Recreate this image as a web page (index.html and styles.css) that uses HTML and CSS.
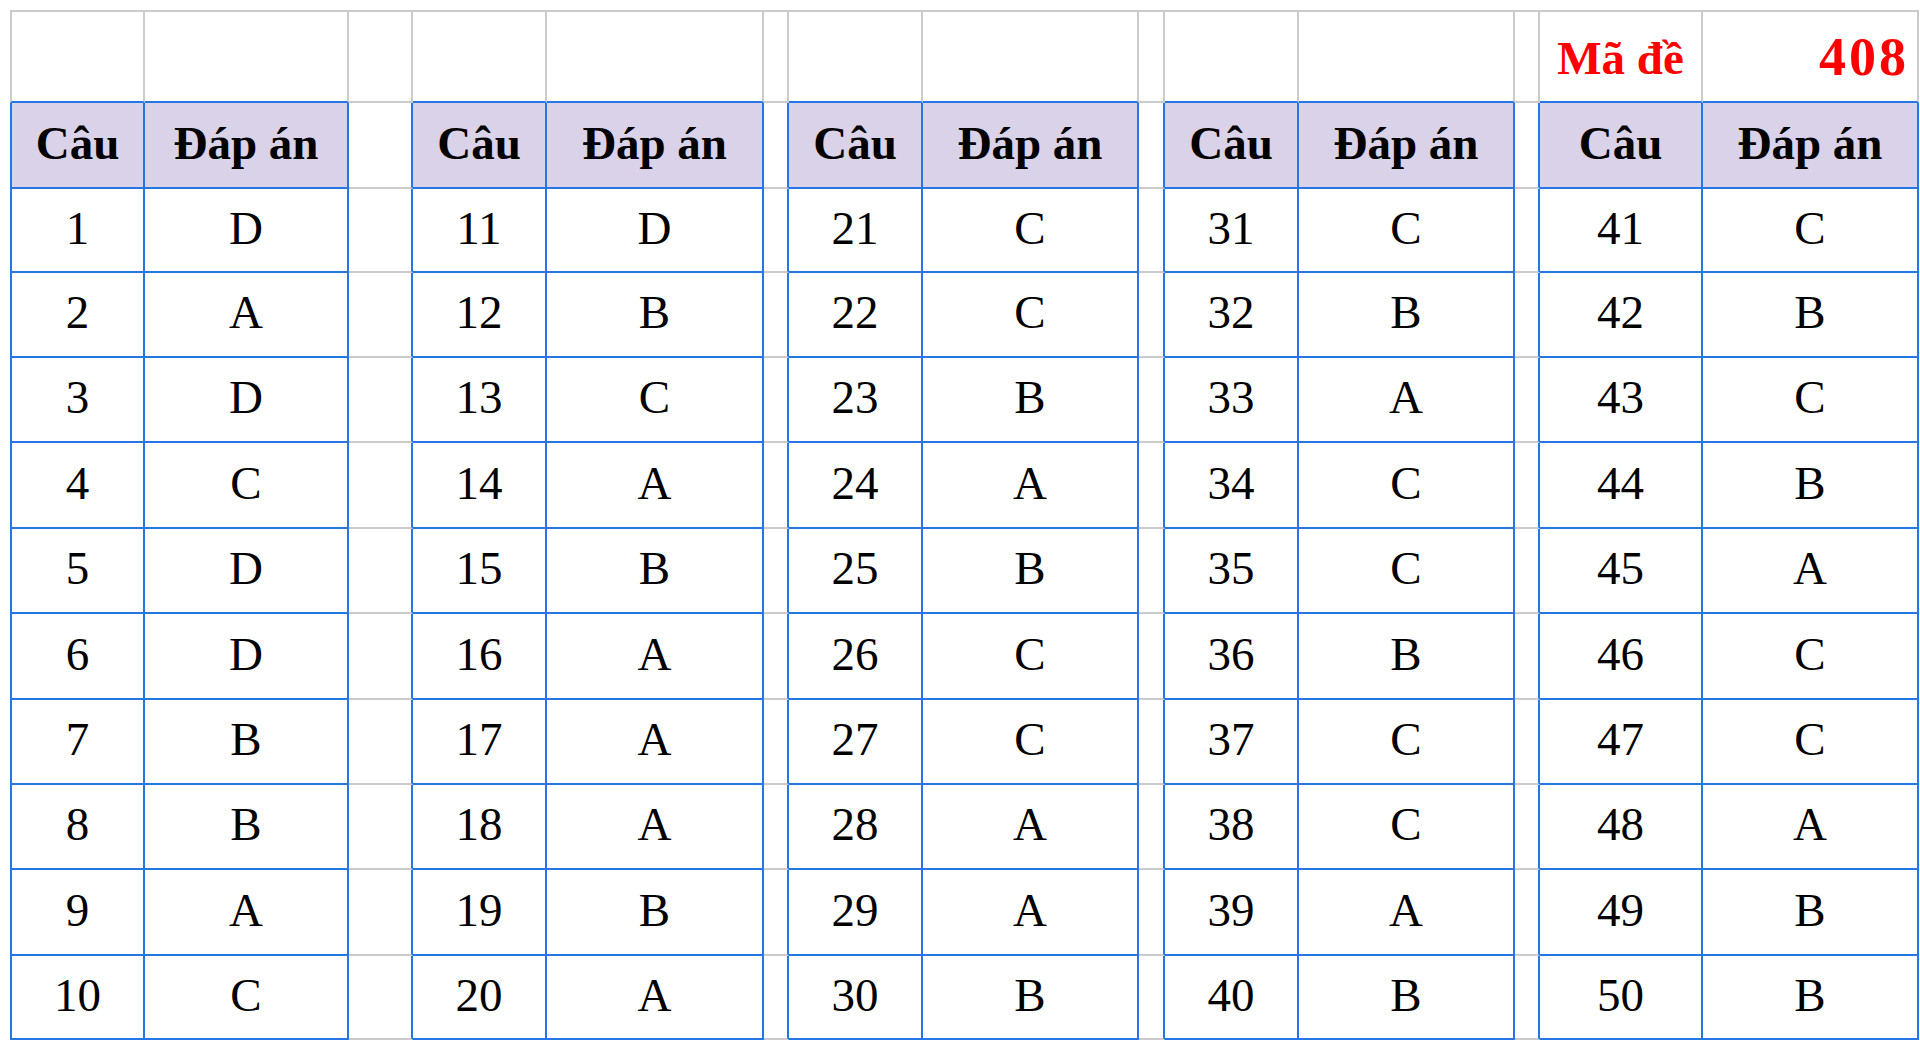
FILE: index.html
```html
<!DOCTYPE html>
<html lang="vi">
<head>
<meta charset="utf-8">
<title>Đáp án mã đề 408</title>
<link rel="stylesheet" href="styles.css">
</head>
<body>
<div class="sheet">
  <!-- top row -->
  <div class="c top first tb"></div><div class="c top tb"></div><div class="c top"></div>
  <div class="c top tb"></div><div class="c top tb"></div><div class="c top"></div>
  <div class="c top tb"></div><div class="c top tb"></div><div class="c top"></div>
  <div class="c top tb"></div><div class="c top tb"></div><div class="c top"></div>
  <div class="c top tb made">Mã đề</div><div class="c top tb code">408</div>

  <!-- header row -->
  <div class="c b first h">Câu</div><div class="c b h">Đáp án</div><div class="c g"></div>
  <div class="c b h">Câu</div><div class="c b h">Đáp án</div><div class="c g"></div>
  <div class="c b h">Câu</div><div class="c b h">Đáp án</div><div class="c g"></div>
  <div class="c b h">Câu</div><div class="c b h">Đáp án</div><div class="c g"></div>
  <div class="c b h">Câu</div><div class="c b h">Đáp án</div>

  <div class="c b first">1</div><div class="c b">D</div><div class="c g"></div>
  <div class="c b">11</div><div class="c b">D</div><div class="c g"></div>
  <div class="c b">21</div><div class="c b">C</div><div class="c g"></div>
  <div class="c b">31</div><div class="c b">C</div><div class="c g"></div>
  <div class="c b">41</div><div class="c b">C</div>

  <div class="c b first">2</div><div class="c b">A</div><div class="c g"></div>
  <div class="c b">12</div><div class="c b">B</div><div class="c g"></div>
  <div class="c b">22</div><div class="c b">C</div><div class="c g"></div>
  <div class="c b">32</div><div class="c b">B</div><div class="c g"></div>
  <div class="c b">42</div><div class="c b">B</div>

  <div class="c b first">3</div><div class="c b">D</div><div class="c g"></div>
  <div class="c b">13</div><div class="c b">C</div><div class="c g"></div>
  <div class="c b">23</div><div class="c b">B</div><div class="c g"></div>
  <div class="c b">33</div><div class="c b">A</div><div class="c g"></div>
  <div class="c b">43</div><div class="c b">C</div>

  <div class="c b first">4</div><div class="c b">C</div><div class="c g"></div>
  <div class="c b">14</div><div class="c b">A</div><div class="c g"></div>
  <div class="c b">24</div><div class="c b">A</div><div class="c g"></div>
  <div class="c b">34</div><div class="c b">C</div><div class="c g"></div>
  <div class="c b">44</div><div class="c b">B</div>

  <div class="c b first">5</div><div class="c b">D</div><div class="c g"></div>
  <div class="c b">15</div><div class="c b">B</div><div class="c g"></div>
  <div class="c b">25</div><div class="c b">B</div><div class="c g"></div>
  <div class="c b">35</div><div class="c b">C</div><div class="c g"></div>
  <div class="c b">45</div><div class="c b">A</div>

  <div class="c b first">6</div><div class="c b">D</div><div class="c g"></div>
  <div class="c b">16</div><div class="c b">A</div><div class="c g"></div>
  <div class="c b">26</div><div class="c b">C</div><div class="c g"></div>
  <div class="c b">36</div><div class="c b">B</div><div class="c g"></div>
  <div class="c b">46</div><div class="c b">C</div>

  <div class="c b first">7</div><div class="c b">B</div><div class="c g"></div>
  <div class="c b">17</div><div class="c b">A</div><div class="c g"></div>
  <div class="c b">27</div><div class="c b">C</div><div class="c g"></div>
  <div class="c b">37</div><div class="c b">C</div><div class="c g"></div>
  <div class="c b">47</div><div class="c b">C</div>

  <div class="c b first">8</div><div class="c b">B</div><div class="c g"></div>
  <div class="c b">18</div><div class="c b">A</div><div class="c g"></div>
  <div class="c b">28</div><div class="c b">A</div><div class="c g"></div>
  <div class="c b">38</div><div class="c b">C</div><div class="c g"></div>
  <div class="c b">48</div><div class="c b">A</div>

  <div class="c b first">9</div><div class="c b">A</div><div class="c g"></div>
  <div class="c b">19</div><div class="c b">B</div><div class="c g"></div>
  <div class="c b">29</div><div class="c b">A</div><div class="c g"></div>
  <div class="c b">39</div><div class="c b">A</div><div class="c g"></div>
  <div class="c b">49</div><div class="c b">B</div>

  <div class="c b first">10</div><div class="c b">C</div><div class="c g"></div>
  <div class="c b">20</div><div class="c b">A</div><div class="c g"></div>
  <div class="c b">30</div><div class="c b">B</div><div class="c g"></div>
  <div class="c b">40</div><div class="c b">B</div><div class="c g"></div>
  <div class="c b">50</div><div class="c b">B</div>
</div>
</body>
</html>
```

FILE: styles.css
```css
html, body {
  margin: 0;
  padding: 0;
  background: #ffffff;
}

body {
  font-family: "Liberation Serif", "Times New Roman", serif;
  color: #000000;
}

.sheet {
  display: grid;
  margin: 10px 0 0 10px;
  width: 1909px;
  grid-template-columns: 135px 204px 64px 134px 217px 25px 134px 216px 26px 134px 216px 25px 163px 216px;
  grid-template-rows: 93px 86px 84px 85px 85px 86px 85px 86px 85px 85px 86px 84px;
}

.c {
  box-sizing: border-box;
  border-right: 2px solid #cbcbcb;
  border-bottom: 2px solid #cbcbcb;
  display: flex;
  align-items: center;
  justify-content: center;
  font-size: 47px;
  line-height: 1;
  white-space: nowrap;
  padding-bottom: 4px;
}

.top {
  border-top: 2px solid #cbcbcb;
}

.first {
  border-left: 2px solid #cbcbcb;
}

.tb {
  border-bottom-color: #2677e6;
}

.b {
  border-right-color: #2677e6;
  border-bottom-color: #2677e6;
}

.b.first {
  border-left-color: #2677e6;
}

.g {
  border-right-color: #2677e6;
}

.h {
  background: #d9d2e9;
  font-weight: bold;
}

.made {
  color: #ff0000;
  font-weight: bold;
  padding-top: 4px;
  padding-bottom: 0;
}

.code {
  color: #ff0000;
  font-weight: bold;
  font-size: 54px;
  letter-spacing: 3px;
  justify-content: flex-end;
  padding-bottom: 0;
  padding-right: 8px;
}
```
